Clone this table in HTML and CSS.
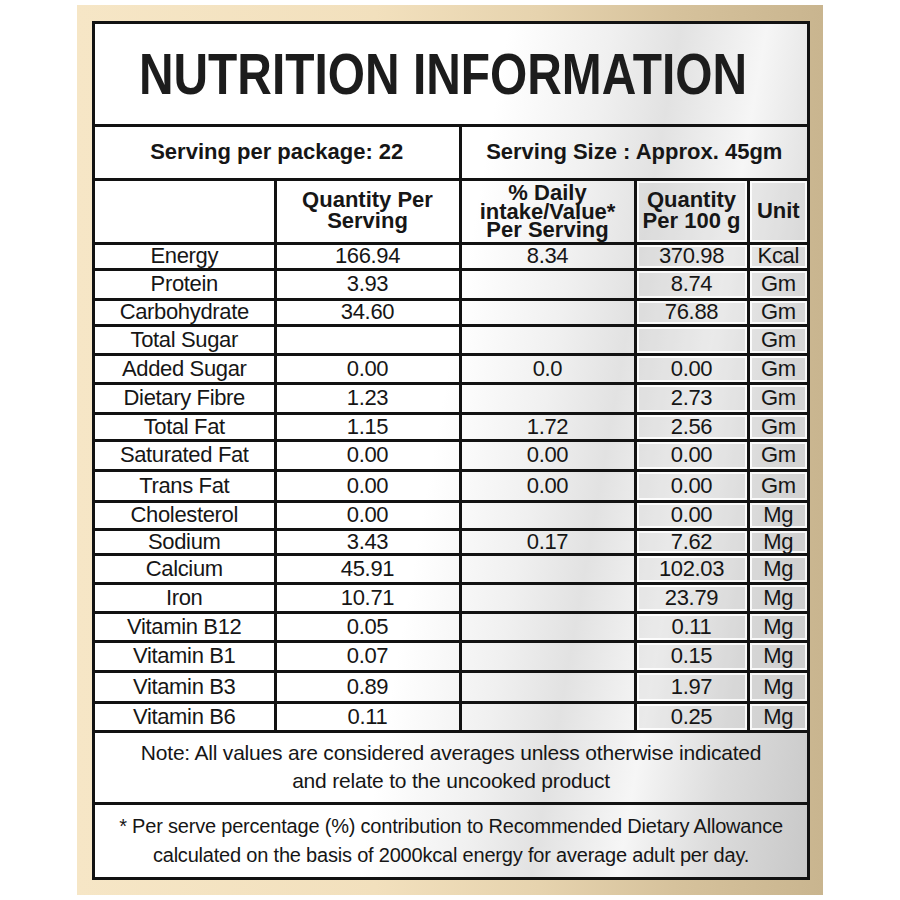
FILE: index.html
```html
<!DOCTYPE html>
<html lang="en">
<head>
<meta charset="utf-8">
<title>Nutrition Information</title>
<link rel="stylesheet" href="styles.css">
</head>
<body>
<div class="frame">
  <div class="label">
    <table class="grid">
      <colgroup>
        <col class="c1"><col class="c2"><col class="c3"><col class="c4"><col class="c5">
      </colgroup>
      <tbody>
        <tr class="title-row"><td colspan="5" class="title"><span class="squeeze">NUTRITION INFORMATION</span></td></tr>
        <tr class="serving-row">
          <td colspan="2" class="bold">Serving per package: 22</td>
          <td colspan="3" class="bold">Serving Size : Approx. 45gm</td>
        </tr>
        <tr class="head-row">
          <td></td>
          <td class="bold head">Quantity Per<br>Serving</td>
          <td class="bold head tight">% Daily<br>intake/Value*<br>Per Serving</td>
          <td class="bold head metal">Quantity<br>Per 100 g</td>
          <td class="bold head metal">Unit</td>
        </tr>
        <tr class="h26"><td>Energy</td><td>166.94</td><td>8.34</td><td class="metal">370.98</td><td class="metal">Kcal</td></tr>
        <tr class="h30"><td>Protein</td><td>3.93</td><td></td><td class="metal">8.74</td><td class="metal">Gm</td></tr>
        <tr class="h26"><td>Carbohydrate</td><td>34.60</td><td></td><td class="metal">76.88</td><td class="metal">Gm</td></tr>
        <tr class="h29"><td>Total Sugar</td><td></td><td></td><td class="metal"></td><td class="metal">Gm</td></tr>
        <tr class="h29"><td>Added Sugar</td><td>0.00</td><td>0.0</td><td class="metal">0.00</td><td class="metal">Gm</td></tr>
        <tr class="h30"><td>Dietary Fibre</td><td>1.23</td><td></td><td class="metal">2.73</td><td class="metal">Gm</td></tr>
        <tr class="h27"><td>Total Fat</td><td>1.15</td><td>1.72</td><td class="metal">2.56</td><td class="metal">Gm</td></tr>
        <tr class="h30"><td>Saturated Fat</td><td>0.00</td><td>0.00</td><td class="metal">0.00</td><td class="metal">Gm</td></tr>
        <tr class="h31"><td>Trans Fat</td><td>0.00</td><td>0.00</td><td class="metal">0.00</td><td class="metal">Gm</td></tr>
        <tr class="h28"><td>Cholesterol</td><td>0.00</td><td></td><td class="metal">0.00</td><td class="metal">Mg</td></tr>
        <tr class="h24"><td>Sodium</td><td>3.43</td><td>0.17</td><td class="metal">7.62</td><td class="metal">Mg</td></tr>
        <tr class="h29"><td>Calcium</td><td>45.91</td><td></td><td class="metal">102.03</td><td class="metal">Mg</td></tr>
        <tr class="h29"><td>Iron</td><td>10.71</td><td></td><td class="metal">23.79</td><td class="metal">Mg</td></tr>
        <tr class="h29"><td>Vitamin B12</td><td>0.05</td><td></td><td class="metal">0.11</td><td class="metal">Mg</td></tr>
        <tr class="h30"><td>Vitamin B1</td><td>0.07</td><td></td><td class="metal">0.15</td><td class="metal">Mg</td></tr>
        <tr class="h31"><td>Vitamin B3</td><td>0.89</td><td></td><td class="metal">1.97</td><td class="metal">Mg</td></tr>
        <tr class="h29"><td>Vitamin B6</td><td>0.11</td><td></td><td class="metal">0.25</td><td class="metal">Mg</td></tr>
        <tr class="note-row"><td colspan="5" class="note">Note: All values are considered averages unless otherwise indicated<br>and relate to the uncooked product</td></tr>
        <tr class="foot-row"><td colspan="5" class="note foot">* Per serve percentage (%) contribution to Recommended Dietary Allowance<br>calculated on the basis of 2000kcal energy for average adult per day.</td></tr>
      </tbody>
    </table>
  </div>
</div>
</body>
</html>
```

FILE: styles.css
```css
html, body {
  margin: 0;
  padding: 0;
  background: #ffffff;
}

body {
  font-family: "Liberation Sans", Arial, sans-serif;
  color: #161616;
}

.frame {
  margin: 5px 0 0 77px;
  width: 746px;
  height: 890px;
  box-sizing: border-box;
  padding: 16px 13px 15px 15px;
  background: linear-gradient(90deg, #f6e6c6 0%, #f2e0bd 40%, #e6d3ae 62%, #d6c29c 80%, #c9b58f 100%);
}

.label {
  width: 718px;
  height: 859px;
  box-sizing: border-box;
  border: 3px solid #121212;
  background: linear-gradient(100deg, #ffffff 0%, #ffffff 48%, #f0f0f0 60%, #e2e2e2 68%, #f6f6f6 78%, #dcdcdc 88%, #c8c8c8 100%);
}

.grid {
  width: 712px;
  height: 853px;
  table-layout: fixed;
  border-collapse: collapse;
  border-style: hidden;
}

.c1 { width: 180px; }
.c2 { width: 185px; }
.c3 { width: 175px; }
.c4 { width: 113px; }
.c5 { width: 59px; }

.grid td {
  border: 3px solid #121212;
  padding: 0;
  text-align: center;
  vertical-align: middle;
  font-size: 22px;
  line-height: 1;
  letter-spacing: -0.35px;
  white-space: nowrap;
}

.title-row { height: 101px; }
.serving-row { height: 54px; }
.head-row { height: 64px; }
.note-row { height: 72px; }
.foot-row { height: 75px; }

.h24 { height: 24px; }
.h26 { height: 26px; }
.h27 { height: 27px; }
.h28 { height: 28px; }
.h29 { height: 29px; }
.h30 { height: 30px; }
.h31 { height: 31px; }

.grid td.title {
  font-weight: bold;
  font-size: 57px;
  letter-spacing: 0;
  color: #1c1c1c;
}

.squeeze {
  display: inline-block;
  transform: scaleX(0.84);
  padding-top: 2px;
  margin-left: -16px;
}

.grid td.bold {
  font-weight: bold;
  letter-spacing: 0;
}

.grid td.head {
  line-height: 0.95;
}

.grid td.tight {
  line-height: 0.86;
  padding-top: 2px;
}

.grid td.metal {
  background: rgba(200, 200, 200, 0.25);
  box-shadow: inset 0 0 0 2px rgba(255, 255, 255, 0.85);
}

.grid td.note {
  font-size: 21px;
  line-height: 28px;
  letter-spacing: -0.2px;
}

.grid td.foot {
  font-size: 20px;
  line-height: 29px;
  letter-spacing: -0.2px;
}
```
